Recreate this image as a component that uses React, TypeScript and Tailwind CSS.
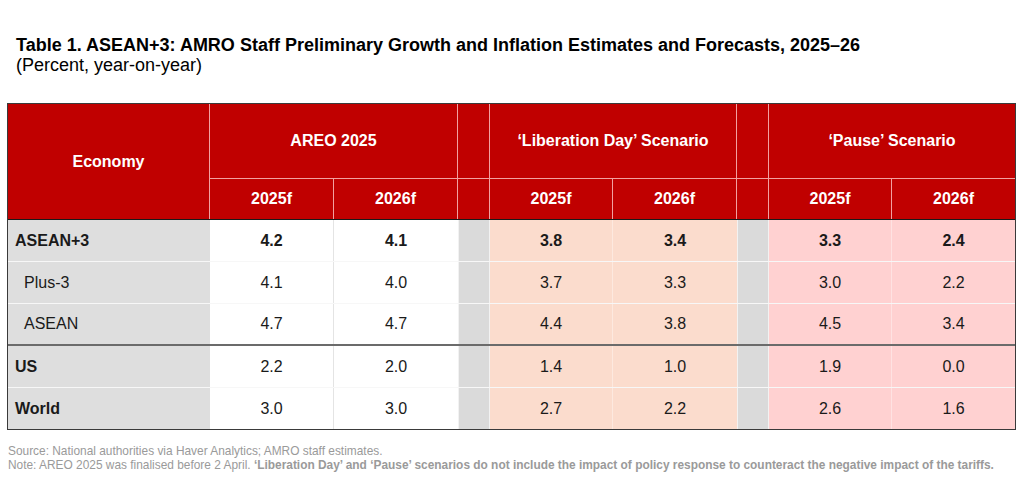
import React from 'react';

type Row = { name: string; bold?: boolean; indent?: boolean; v: string[]; sep?: boolean };

const rows: Row[] = [
  { name: 'ASEAN+3', bold: true, v: ['4.2', '4.1', '3.8', '3.4', '3.3', '2.4'] },
  { name: 'Plus-3', indent: true, v: ['4.1', '4.0', '3.7', '3.3', '3.0', '2.2'] },
  { name: 'ASEAN', indent: true, v: ['4.7', '4.7', '4.4', '3.8', '4.5', '3.4'], sep: true },
  { name: 'US', bold: true, v: ['2.2', '2.0', '1.4', '1.0', '1.9', '0.0'] },
  { name: 'World', bold: true, v: ['3.0', '3.0', '2.7', '2.2', '2.6', '1.6'] },
];

const font = { fontFamily: '"Liberation Sans", Arial, sans-serif' };
const cols = 'grid grid-cols-[202px_124px_124px_32px_123px_124px_32px_123px_123px]';
const hdr = 'bg-[#c00000] text-white font-bold flex items-center justify-center border-[#f2a0a0]';

export default function App() {
  return (
    <div className="w-[1024px] h-[482px] bg-white text-black overflow-hidden" style={font}>
      {/* Title */}
      <div className="pl-4 pt-[35px]">
        <h1 className="text-[18px] leading-[20px] font-bold">
          Table 1. ASEAN+3: AMRO Staff Preliminary Growth and Inflation Estimates and Forecasts, 2025–26
        </h1>
        <p className="text-[18px] leading-[20px]">(Percent, year-on-year)</p>
      </div>

      {/* Table */}
      <div className="ml-[7px] mt-[28px] w-[1009px] border border-[#3a3a3a]">
        <div className={cols + ' text-[16px]'}>
          {/* header row 1 */}
          <div className={hdr + ' row-span-2 border-r'}>Economy</div>
          <div className={hdr + ' col-span-2 h-[75px] border-r border-b'}>AREO 2025</div>
          <div className={hdr + ' border-r border-b'} />
          <div className={hdr + ' col-span-2 border-r border-b'}>‘Liberation Day’ Scenario</div>
          <div className={hdr + ' border-r border-b'} />
          <div className={hdr + ' col-span-2 border-b'}>‘Pause’ Scenario</div>
          {/* header row 2 */}
          <div className={hdr + ' h-[40px] border-r'}>2025f</div>
          <div className={hdr + ' border-r'}>2026f</div>
          <div className={hdr + ' border-r'} />
          <div className={hdr + ' border-r'}>2025f</div>
          <div className={hdr + ' border-r'}>2026f</div>
          <div className={hdr + ' border-r'} />
          <div className={hdr + ' border-r'}>2025f</div>
          <div className={hdr}>2026f</div>
        </div>

        {/* body */}
        <div className="border-t border-[#1a1a1a]">
          {rows.map((r, ri) => {
            const b = ri === 0 ? ' font-bold' : '';
            return (
              <div
                key={r.name}
                className={
                  cols +
                  ' text-[16px] text-[#1a1a1a] ' +
                  (r.sep
                    ? 'border-b-2 border-[#6b6b6b] h-[42px]'
                    : ri === rows.length - 1
                    ? 'h-[41px]'
                    : 'border-b border-[#f7f7f7] h-[42px]')
                }
              >
                <div
                  className={
                    'bg-[#dedede] flex items-center ' +
                    (r.indent ? 'pl-[16px]' : 'pl-[7px]') +
                    (r.bold ? ' font-bold' : '')
                  }
                >
                  {r.name}
                </div>
                <div className={'bg-white flex items-center justify-center border-r border-[#e4e4e4]' + b}>{r.v[0]}</div>
                <div className={'bg-white flex items-center justify-center' + b}>{r.v[1]}</div>
                <div className="bg-[#dadada] border-x border-[#f2f2f2]" />
                <div className={'bg-[#fbdccd] flex items-center justify-center border-r border-[#fde9df]' + b}>{r.v[2]}</div>
                <div className={'bg-[#fbdccd] flex items-center justify-center' + b}>{r.v[3]}</div>
                <div className="bg-[#dadada] border-x border-[#f2f2f2]" />
                <div className={'bg-[#ffd1d1] flex items-center justify-center border-r border-[#ffe2e2]' + b}>{r.v[4]}</div>
                <div className={'bg-[#ffd1d1] flex items-center justify-center' + b}>{r.v[5]}</div>
              </div>
            );
          })}
        </div>
      </div>

      {/* Footer */}
      <div className="pl-[8px] mt-[14px] text-[11.9px] leading-[14px] text-[#9a9a9a]">
        <p>Source: National authorities via Haver Analytics; AMRO staff estimates.</p>
        <p>
          Note: AREO 2025 was finalised before 2 April.{' '}
          <span className="font-bold">
            ‘Liberation Day’ and ‘Pause’ scenarios do not include the impact of policy response to counteract the
            negative impact of the tariffs.
          </span>
        </p>
      </div>
    </div>
  );
}
